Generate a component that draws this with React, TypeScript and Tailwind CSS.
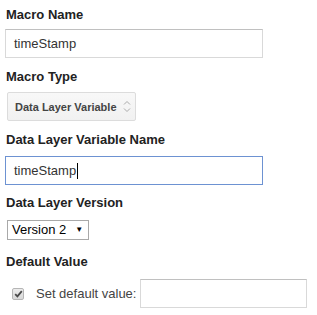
export default function App() {
  return (
    <div className="h-[315px] w-[317px] bg-white pl-[5px] font-['Liberation_Sans',Arial,sans-serif] text-[13px] leading-4 text-[#222]">
      <div className="pt-[7px] pl-px font-bold">Macro Name</div>
      <div className="mt-[6px] flex h-[29px] w-[258px] items-center border border-[#d9d9d9] border-t-[#c0c0c0] pl-2 text-[#333]">
        timeStamp
      </div>

      <div className="mt-[11px] pl-px font-bold">Macro Type</div>
      <div className="mt-[7px] ml-[2px] flex h-[29px] w-[129px] items-center justify-between rounded-[2px] border border-[#dcdcdc] bg-gradient-to-b from-[#f8f8f8] to-[#f1f1f1] pr-[4px] pl-[7px] text-[11px] font-bold text-[#444]">
        <span>Data Layer Variable</span>
        <svg width="8" height="13" viewBox="0 0 8 13" className="text-[#aaa]">
          <path d="M1 4.5 L4 1.5 L7 4.5" fill="none" stroke="currentColor" strokeWidth="1" />
          <path d="M1 8.5 L4 11.5 L7 8.5" fill="none" stroke="currentColor" strokeWidth="1" />
        </svg>
      </div>

      <div className="mt-[11px] pl-px font-bold">Data Layer Variable Name</div>
      <div className="mt-[8px] flex h-[29px] w-[258px] items-center border border-[#6d92d2] pl-2 text-[#333]">
        timeStamp
        <span className="ml-px inline-block h-[16px] w-px bg-black" />
      </div>

      <div className="mt-[10px] pl-px font-bold">Data Layer Version</div>
      <div className="mt-[9px] ml-[2px] flex h-[20px] w-[82px] items-center border border-[#a9a9a9] bg-white pl-[4px] text-black">
        <span>Version 2</span>
        <span className="ml-[9px] text-[8px] leading-none">▼</span>
      </div>

      <div className="mt-[14px] pl-px font-bold">Default Value</div>
      <div className="mt-[9px] flex h-[29px] items-center">
        <div className="ml-[7px] flex h-[12px] w-[12px] items-center justify-center rounded-[2px] border border-[#b5b5b5] bg-gradient-to-b from-[#ececec] to-[#d8d8d8]">
          <svg width="9" height="8" viewBox="0 0 9 8">
            <path d="M1.2 4.2 L3.4 6.4 L7.8 1.2" fill="none" stroke="#4a4a4a" strokeWidth="1.8" />
          </svg>
        </div>
        <span className="ml-[12px] text-[#444]">Set default value:</span>
        <div className="ml-[4px] h-[29px] w-[167px] border border-[#d9d9d9] border-t-[#c0c0c0]" />
      </div>
    </div>
  );
}
